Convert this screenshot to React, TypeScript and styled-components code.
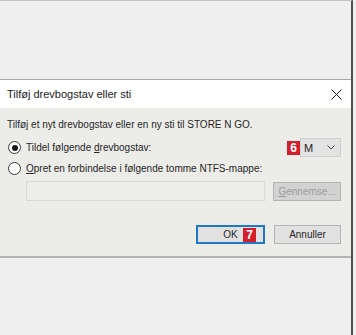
import React from "react";
import styled, { createGlobalStyle } from "styled-components";

const GlobalStyle = createGlobalStyle`
  html, body {
    margin: 0;
    padding: 0;
    background: #efefef;
  }
  body {
    font-family: "Liberation Sans", Arial, sans-serif;
  }
`;

const Screen = styled.div`
  width: 356px;
  height: 335px;
  overflow: hidden;
  background: #efefef;
`;

const Window = styled.div`
  display: flex;
  flex-direction: column;
  width: 353px;
  height: 335px;
  border-right: 2px solid #4f4f4f;
  border-top: 1px solid #c4c4c4;
  box-sizing: border-box;
`;

const Backdrop = styled.div`
  height: 78px;
  background: #efefef;
`;

const Dialog = styled.div`
  display: flex;
  flex-direction: column;
  border-top: 1px solid #a9a9a9;
  border-bottom: 2px solid #b4b4b4;
`;

const TitleBar = styled.div`
  display: flex;
  align-items: center;
  justify-content: space-between;
  height: 28px;
  padding: 0 9px 0 7px;
  background: #ffffff;
  font-size: 11px;
  color: #1a1a1a;
`;

const Body = styled.div`
  display: flex;
  flex-direction: column;
  height: 148px;
  padding: 9px 10px 0 7px;
  background: #ecece9;
  font-size: 10px;
  color: #262626;
  box-sizing: border-box;
`;

const Line = styled.div`
  line-height: 16px;
  white-space: nowrap;
`;

const RadioRow = styled.div<{ $top: number }>`
  display: flex;
  align-items: center;
  height: 19px;
  margin-top: ${(p) => p.$top}px;
  white-space: nowrap;
`;

const Radio = styled.span<{ $checked?: boolean }>`
  display: flex;
  align-items: center;
  justify-content: center;
  width: 11px;
  height: 11px;
  margin: 0 5px 0 1px;
  border: 1px solid #3a3a3a;
  border-radius: 50%;
  background: #fff;
  &::after {
    content: "";
    display: ${(p) => (p.$checked ? "block" : "none")};
    width: 6px;
    height: 6px;
    border-radius: 50%;
    background: #1a1a1a;
  }
`;

const Spacer = styled.div`
  flex: 1;
`;

const Badge = styled.span`
  display: inline-flex;
  align-items: center;
  justify-content: center;
  width: 13px;
  height: 14px;
  background: #d21f2b;
  color: #fff;
  font-weight: bold;
  font-size: 12px;
`;

const OverlayBadge = styled(Badge)`
  position: absolute;
  top: 1px;
  right: 7px;
`;

const Select = styled.div`
  display: flex;
  align-items: center;
  justify-content: space-between;
  width: 41px;
  height: 19px;
  padding: 0 5px 0 3px;
  box-sizing: border-box;
  background: #e3e3e3;
  border: 1px solid #cfcfcf;
  font-size: 11px;
`;

const InputRow = styled.div`
  display: flex;
  align-items: center;
  gap: 8px;
  margin: 3px 0 0 19px;
`;

const PathInput = styled.div`
  width: 240px;
  height: 20px;
  box-sizing: border-box;
  background: #ededeb;
  border: 1px solid #d9d9d9;
`;

const Button = styled.div<{ $w: number; $primary?: boolean; $disabled?: boolean }>`
  position: relative;
  display: flex;
  align-items: center;
  justify-content: center;
  width: ${(p) => p.$w}px;
  height: 19px;
  box-sizing: border-box;
  background: ${(p) => (p.$disabled ? "#d2d2d2" : "#e1e1e1")};
  border: ${(p) => (p.$primary ? "2px solid #1f77c9" : "1px solid #b4b4b4")};
  color: ${(p) => (p.$disabled ? "#9d9d9d" : "#262626")};
  font-size: 10px;
`;

const ButtonRow = styled.div`
  display: flex;
  justify-content: flex-end;
  gap: 9px;
  margin-top: 24px;
`;

const Underline = styled.span`
  text-decoration: underline;
`;

export default function App() {
  return (
    <Screen>
      <GlobalStyle />
      <Window>
        <Backdrop />
        <Dialog>
          <TitleBar>
            <span>Tilføj drevbogstav eller sti</span>
            <svg width="11" height="11" viewBox="0 0 11 11">
              <path d="M0.5 0.5 L10.5 10.5 M10.5 0.5 L0.5 10.5" stroke="#222" strokeWidth="1" />
            </svg>
          </TitleBar>
          <Body>
            <Line>Tilføj et nyt drevbogstav eller en ny sti til STORE N GO.</Line>
            <RadioRow $top={5}>
              <Radio $checked />
              <span>Tildel følgende <Underline>d</Underline>revbogstav:</span>
              <Spacer />
              <Badge>6</Badge>
              <Select>
                <span>M</span>
                <svg width="8" height="5" viewBox="0 0 8 5">
                  <path d="M0.5 0.5 L4 4 L7.5 0.5" fill="none" stroke="#444" strokeWidth="1" />
                </svg>
              </Select>
            </RadioRow>
            <RadioRow $top={2}>
              <Radio />
              <span><Underline>O</Underline>pret en forbindelse i følgende tomme NTFS-mappe:</span>
            </RadioRow>
            <InputRow>
              <PathInput />
              <Button $w={68} $disabled>
                <span><Underline>G</Underline>ennemse...</span>
              </Button>
            </InputRow>
            <ButtonRow>
              <Button $w={69} $primary>
                <span>OK</span>
                <OverlayBadge>7</OverlayBadge>
              </Button>
              <Button $w={67}>Annuller</Button>
            </ButtonRow>
          </Body>
        </Dialog>
      </Window>
    </Screen>
  );
}
